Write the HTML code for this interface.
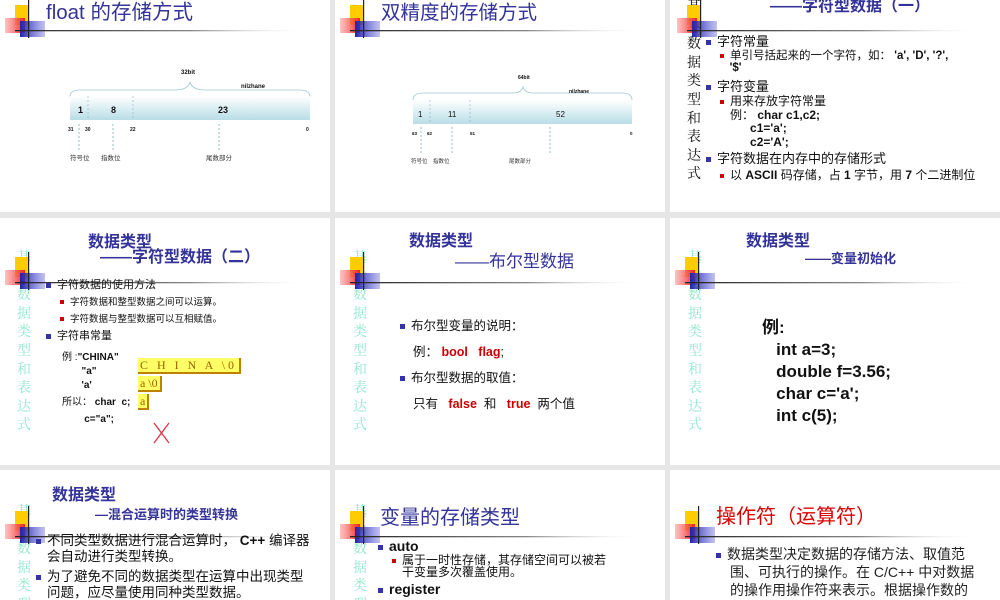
<!DOCTYPE html>
<html><head><meta charset="utf-8">
<style>
html,body{margin:0;width:1000px;height:600px;overflow:hidden}
body{background:#e6e6e6;position:relative;font-family:"Liberation Sans","Noto Sans CJK SC",sans-serif}
.s{position:absolute;background:#fff;overflow:hidden}
.a{position:absolute;white-space:nowrap;line-height:1}
.t{color:#333399}
.b{font-weight:bold}
.vt{position:absolute;width:20px;text-align:center;font-size:14px;line-height:18.6px;color:#90e8c8;font-family:"Noto Serif CJK SC","Noto Sans CJK SC",serif}
.bl{display:inline-block;width:5px;height:5px;background:#3333aa;margin-right:6px;vertical-align:middle}
.rb{display:inline-block;width:4px;height:4px;background:#cc0000;margin-right:6px;vertical-align:middle}
.red{color:#cc0000;font-weight:bold}
.box{position:absolute;background:#ffff66;border-right:2px solid #c08000;border-bottom:2px solid #c08000;font-family:"Liberation Serif",serif;font-size:12px;color:#a06000;padding:0 2px;line-height:14px}
</style></head><body>

<div class="s" style="left:0;top:0;width:330px;height:212px"></div>
<div class="s" style="left:335px;top:0;width:330px;height:212px"></div>
<div class="s" style="left:670px;top:0;width:330px;height:212px"></div>
<div class="s" style="left:0;top:218px;width:330px;height:247px"></div>
<div class="s" style="left:335px;top:218px;width:330px;height:247px"></div>
<div class="s" style="left:670px;top:218px;width:330px;height:247px"></div>
<div class="s" style="left:0;top:470px;width:330px;height:130px"></div>
<div class="s" style="left:335px;top:470px;width:330px;height:130px"></div>
<div class="s" style="left:670px;top:470px;width:330px;height:130px"></div>

<div class="vt" style="left:684px;top:-3px;color:#111">基<br>本<br>数<br>据<br>类<br>型<br>和<br>表<br>达<br>式</div>
<div class="vt" style="left:14px;top:248px">基<br>本<br>数<br>据<br>类<br>型<br>和<br>表<br>达<br>式</div>
<div class="vt" style="left:350px;top:248px">基<br>本<br>数<br>据<br>类<br>型<br>和<br>表<br>达<br>式</div>
<div class="vt" style="left:685px;top:248px">基<br>本<br>数<br>据<br>类<br>型<br>和<br>表<br>达<br>式</div>
<div class="vt" style="left:14px;top:502px">基<br>本<br>数<br>据<br>类<br>型</div>
<div class="vt" style="left:350px;top:502px">基<br>本<br>数<br>据<br>类<br>型</div>

<svg width="1000" height="600" style="position:absolute;left:0;top:0" xmlns="http://www.w3.org/2000/svg">
<defs>
<linearGradient id="hl" x1="0" x2="1"><stop offset="0" stop-color="#222"/><stop offset="0.6" stop-color="#888"/><stop offset="1" stop-color="#fff" stop-opacity="0"/></linearGradient>
<linearGradient id="bx" x1="0" x2="0" y1="0" y2="1"><stop offset="0" stop-color="#fff"/><stop offset="1" stop-color="#b8dde6"/></linearGradient>
<linearGradient id="rd" x1="0" x2="1"><stop offset="0" stop-color="#ff9999" stop-opacity=".6"/><stop offset="1" stop-color="#ee2222"/></linearGradient>
<linearGradient id="bu" x1="0" x2="1"><stop offset="0" stop-color="#2222aa"/><stop offset="1" stop-color="#6666dd" stop-opacity=".4"/></linearGradient>
<g id="logo">
<rect x="0" y="0" width="14" height="20" fill="#ffcc00"/>
<rect x="-10" y="13" width="20" height="15" fill="url(#rd)"/>
<rect x="5" y="16" width="25" height="16" fill="url(#bu)"/>
<rect x="13" y="-5" width="1.2" height="38" fill="#222"/>
<rect x="0" y="25" width="295" height="1.3" fill="url(#hl)"/>
</g>
</defs>
<use href="#logo" x="15" y="5"/>
<use href="#logo" x="350" y="5"/>
<use href="#logo" x="687" y="5"/>
<use href="#logo" x="15" y="257"/>
<use href="#logo" x="350" y="257"/>
<use href="#logo" x="685" y="257"/>
<use href="#logo" x="15" y="511"/>
<use href="#logo" x="350" y="511"/>
<use href="#logo" x="685" y="511"/>

<g font-family="Liberation Sans,Noto Sans CJK SC,sans-serif" fill="#111">
<path d="M70 97 Q70 90 80 90 L175 90 Q188 90 190 82 Q192 90 205 90 L300 90 Q310 90 310 97" fill="none" stroke="#9cc8d4" stroke-width="0.8"/>
<rect x="70" y="96" width="240" height="24" fill="url(#bx)"/>
<line x1="88" y1="96" x2="88" y2="120" stroke="#9ab" stroke-dasharray="2,2" stroke-width=".6"/>
<line x1="133" y1="96" x2="133" y2="120" stroke="#9ab" stroke-dasharray="2,2" stroke-width=".6"/>
<text x="78" y="113" font-size="9" font-weight="bold">1</text>
<text x="111" y="113" font-size="9" font-weight="bold">8</text>
<text x="218" y="113" font-size="9" font-weight="bold">23</text>
<text x="181" y="74" font-size="6" font-weight="bold">32bit</text>
<text x="241" y="88" font-size="6" font-weight="bold">nilzhane</text>
<g font-size="5" font-weight="bold"><text x="68" y="131">31</text><text x="85" y="131">30</text><text x="130" y="131">22</text><text x="306" y="131">0</text></g>
<g stroke="#6aa8b8" stroke-dasharray="2,2" stroke-width=".7"><line x1="79" y1="124" x2="79" y2="150"/><line x1="113" y1="124" x2="113" y2="150"/><line x1="219" y1="124" x2="219" y2="150"/></g>
<g font-size="6.5" fill="#333"><text x="70" y="160">符号位</text><text x="101" y="160">指数位</text><text x="206" y="160">尾数部分</text></g>
</g>
<g font-family="Liberation Sans,Noto Sans CJK SC,sans-serif" fill="#111">
<path d="M413 100 Q413 93 423 93 L513 93 Q521 93 523 87 Q525 93 533 93 L622 93 Q632 93 632 100" fill="none" stroke="#9cc8d4" stroke-width="0.8"/>
<rect x="413" y="100" width="219" height="24" fill="url(#bx)"/>
<line x1="430" y1="100" x2="430" y2="124" stroke="#9ab" stroke-dasharray="2,2" stroke-width=".6"/>
<line x1="470" y1="100" x2="470" y2="124" stroke="#9ab" stroke-dasharray="2,2" stroke-width=".6"/>
<text x="418" y="117" font-size="8">1</text><text x="448" y="117" font-size="8">11</text><text x="556" y="117" font-size="8">52</text>
<text x="518" y="79" font-size="5" font-weight="bold">64bit</text>
<text x="569" y="93" font-size="5" font-weight="bold">nilzhane</text>
<g font-size="4.5" font-weight="bold"><text x="412" y="135">63</text><text x="427" y="135">62</text><text x="470" y="135">51</text><text x="630" y="135">0</text></g>
<g stroke="#6aa8b8" stroke-dasharray="2,2" stroke-width=".7"><line x1="421" y1="127" x2="421" y2="154"/><line x1="452" y1="127" x2="452" y2="154"/><line x1="550" y1="127" x2="550" y2="154"/></g>
<g font-size="5.5" fill="#333"><text x="411" y="163">符号位</text><text x="433" y="163">指数位</text><text x="509" y="163">尾数部分</text></g>
</g>
<g stroke="#dd3344" stroke-width="1.3"><line x1="154" y1="423" x2="169" y2="443"/><line x1="169" y1="423" x2="154" y2="443"/></g>
</svg>

<div class="a t" style="left:46px;top:3px;font-size:20.5px">float 的存储方式</div>
<div class="a t" style="left:381px;top:4px;font-size:19.5px">双精度的存储方式</div>

<div class="a t b" style="left:770px;top:-1px;font-size:16px">——字符型数据（一）</div>
<div class="a" style="left:706px;top:33px;font-size:13px;line-height:17px;color:#111">
<div><span class="bl"></span>字符常量</div>
<div style="padding-left:14px;font-size:11.5px;line-height:12px"><span class="rb"></span>单引号括起来的一个字符，如： <b>'a', 'D', '?',</b><br>&nbsp;&nbsp;&nbsp;<b>'$'</b></div>
<div style="margin-top:4px"><span class="bl"></span>字符变量</div>
<div style="padding-left:14px;font-size:12px;line-height:13.5px"><span class="rb"></span>用来存放字符常量<br>&nbsp;&nbsp;&nbsp;例： <b>char c1,c2;</b><br>&nbsp;&nbsp;&nbsp;&nbsp;&nbsp;&nbsp;&nbsp;&nbsp;&nbsp;<b>c1='a';</b><br>&nbsp;&nbsp;&nbsp;&nbsp;&nbsp;&nbsp;&nbsp;&nbsp;&nbsp;<b>c2='A';</b></div>
<div style="margin-top:1px"><span class="bl"></span>字符数据在内存中的存储形式</div>
<div style="padding-left:14px;font-size:12px"><span class="rb"></span>以 <b>ASCII</b> 码存储，占 <b>1</b> 字节，用 <b>7</b> 个二进制位</div>
</div>

<div class="a t b" style="left:88px;top:235px;font-size:16px">数据类型</div>
<div class="a t b" style="left:100px;top:250px;font-size:16px">——字符型数据（二）</div>
<div class="a" style="left:46px;top:277px;font-size:11px;color:#111;line-height:17px">
<div><span class="bl"></span>字符数据的使用方法</div>
<div style="padding-left:14px;font-size:9.5px"><span class="rb"></span>字符数据和整型数据之间可以运算。</div>
<div style="padding-left:14px;font-size:9.5px"><span class="rb"></span>字符数据与整型数据可以互相赋值。</div>
<div><span class="bl"></span>字符串常量</div>
</div>
<div class="a" style="left:62px;top:351px;font-size:10px;line-height:14px;color:#111">例 :<b>"CHINA"</b><br>&nbsp;&nbsp;&nbsp;&nbsp;&nbsp;&nbsp;&nbsp;<b>"a"</b><br>&nbsp;&nbsp;&nbsp;&nbsp;&nbsp;&nbsp;&nbsp;<b>'a'</b><br><span style="line-height:20px">所以： <b>char&nbsp; c;</b></span><br>&nbsp;&nbsp;&nbsp;&nbsp;&nbsp;&nbsp;&nbsp;&nbsp;<b>c="a";</b></div>
<div class="box" style="left:138px;top:358px;letter-spacing:3px">C H I N A \0</div>
<div class="box" style="left:138px;top:376px">a \0</div>
<div class="box" style="left:138px;top:394px">a</div>

<div class="a t b" style="left:409px;top:234px;font-size:16px">数据类型</div>
<div class="a t" style="left:455px;top:253px;font-size:17px">——布尔型数据</div>
<div class="a" style="left:400px;top:313px;font-size:12.5px;line-height:26px;color:#111">
<div><span class="bl"></span>布尔型变量的说明：</div>
<div style="padding-left:13px">例： <span class="red">bool &nbsp; flag</span>;</div>
<div><span class="bl"></span>布尔型数据的取值：</div>
<div style="padding-left:13px">只有 &nbsp; <span class="red">false</span> &nbsp;和 &nbsp; <span class="red">true</span> &nbsp;两个值</div>
</div>

<div class="a t b" style="left:746px;top:234px;font-size:16px">数据类型</div>
<div class="a t b" style="left:805px;top:252px;font-size:13px">——变量初始化</div>
<div class="a b" style="left:762px;top:317px;font-size:17px;line-height:22px;color:#111">例:<br>&nbsp;&nbsp;&nbsp;int a=3;<br>&nbsp;&nbsp;&nbsp;double f=3.56;<br>&nbsp;&nbsp;&nbsp;char c='a';<br>&nbsp;&nbsp;&nbsp;int c(5);</div>

<div class="a t b" style="left:52px;top:488px;font-size:16px">数据类型</div>
<div class="a t b" style="left:95px;top:508px;font-size:13px">—混合运算时的类型转换</div>
<div class="a" style="left:36px;top:533px;font-size:13.5px;line-height:16px;color:#111">
<div><span class="bl"></span>不同类型数据进行混合运算时， <b>C++</b> 编译器</div>
<div style="padding-left:11px">会自动进行类型转换。</div>
<div style="margin-top:4px"><span class="bl"></span>为了避免不同的数据类型在运算中出现类型</div>
<div style="padding-left:11px">问题，应尽量使用同种类型数据。</div>
</div>

<div class="a t" style="left:380px;top:508px;font-size:20px">变量的存储类型</div>
<div class="a" style="left:378px;top:539px;font-size:14px;line-height:15px;color:#111">
<div><span class="bl"></span><b>auto</b></div>
<div style="padding-left:14px;font-size:12px;line-height:12px"><span class="rb"></span>属于一时性存储，其存储空间可以被若<br>&nbsp;&nbsp;&nbsp;干变量多次覆盖使用。</div>
<div style="margin-top:4px"><span class="bl"></span><b>register</b></div>
</div>

<div class="a" style="left:716px;top:507px;font-size:20px;color:#dd0000">操作符（运算符）</div>
<div class="a" style="left:716px;top:545px;font-size:14px;line-height:18px;color:#222">
<div><span class="bl"></span>数据类型决定数据的存储方法、取值范</div>
<div style="padding-left:14px">围、可执行的操作。在 C/C++ 中对数据</div>
<div style="padding-left:14px">的操作用操作符来表示。根据操作数的</div>
</div>
</body></html>
